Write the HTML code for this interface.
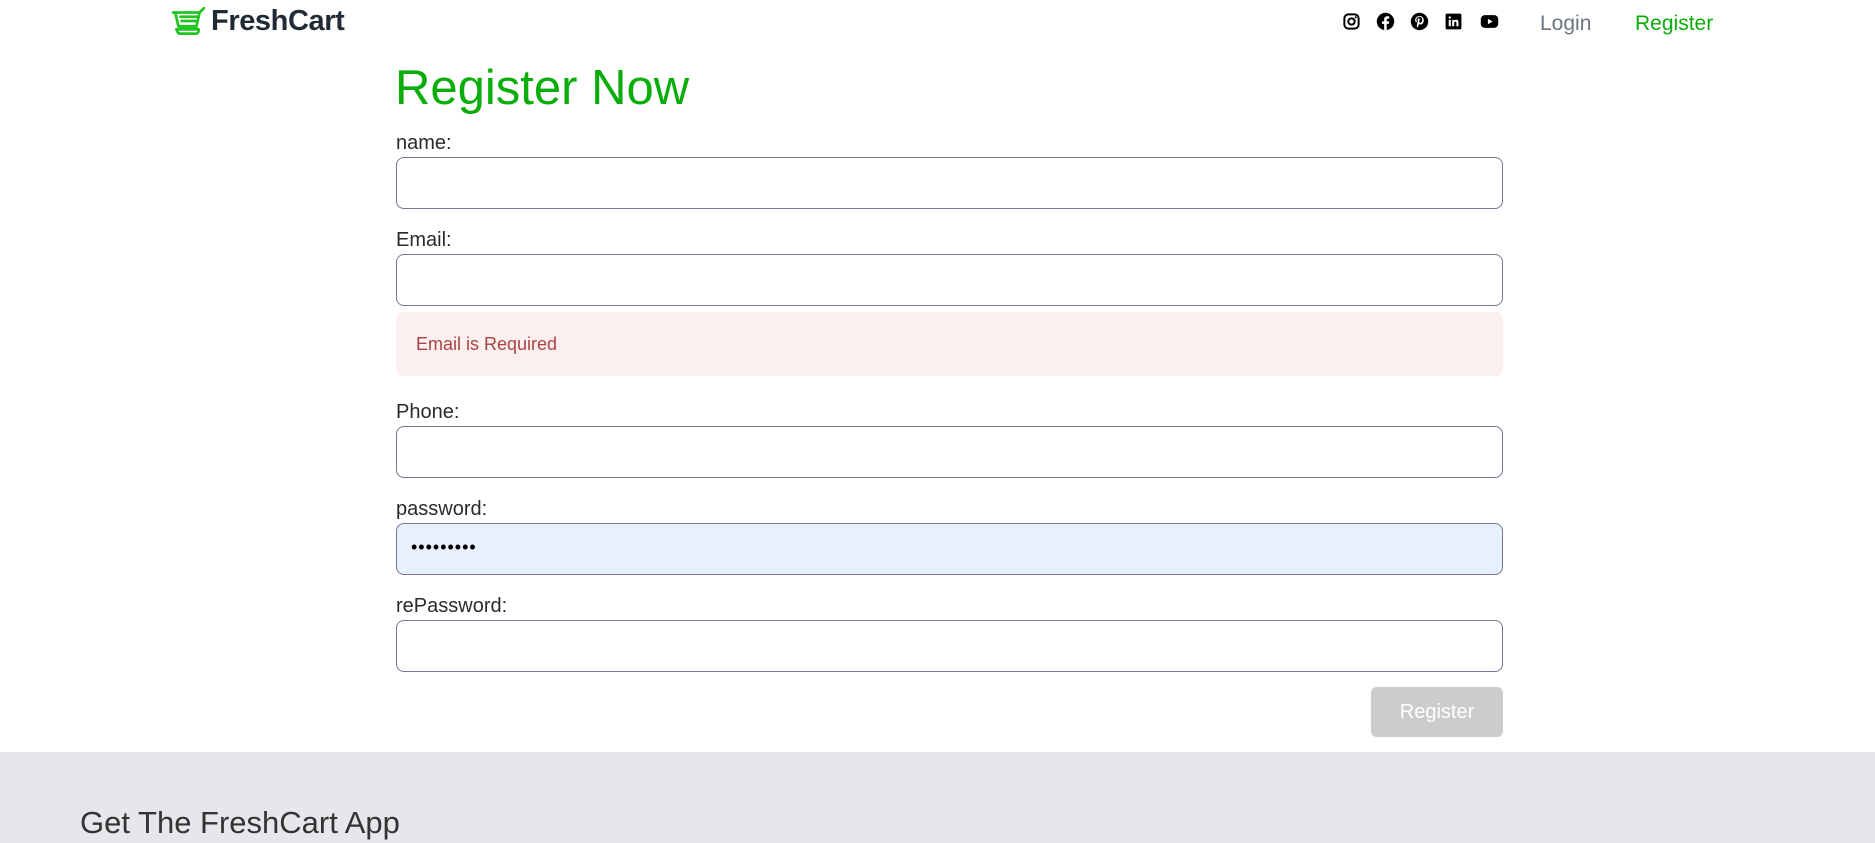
<!DOCTYPE html>
<html><head><meta charset="utf-8"><style>
*{box-sizing:border-box;margin:0;padding:0}
body{width:1875px;height:843px;overflow:hidden;background:#fff;font-family:"Liberation Sans",sans-serif;color:#212529;position:relative}
.abs{position:absolute}
.logo{left:171px;top:5px;display:flex;align-items:center}
.logo span{font-weight:bold;font-size:29px;color:#212b36;margin-left:4px;letter-spacing:-0.4px}
.icons{left:1342px;top:12px;display:flex;gap:15px}
.icons svg{width:19px;height:19px}
.nav{top:12px;font-size:21px}
label{position:absolute;left:396px;font-size:20px;color:#2a2a2a}
.inp{position:absolute;left:396px;width:1107px;height:52px;border:1px solid #767690;border-radius:8px;background:#fff}
.alert{position:absolute;left:396px;top:312px;width:1107px;height:64px;background:#fbefef;border-radius:8px;color:#a94442;font-size:18px;padding:22px 0 0 20px}
.btn{position:absolute;left:1371px;top:687px;width:132px;height:50px;background:#ccc;border-radius:6px;color:#fff;font-size:20px;text-align:center;line-height:50px}
.footer{position:absolute;left:0;top:752px;width:1875px;height:91px;background:#e5e7eb}
.footer div{position:absolute;left:80px;top:53px;font-size:31px;color:#333}
</style></head><body>
<div class="abs logo">
<svg width="36" height="30" viewBox="0 0 34 28" fill="none" stroke="#22c322" stroke-width="2.6" stroke-linecap="round" stroke-linejoin="round"><path d="M2 5h25l4-4"/><path d="M4 5l3 13h17l3-13"/><path d="M9 9h16M10 13h13"/><path d="M5 21h21"/><rect x="6" y="20" width="20" height="5" rx="2.5"/></svg>
<span>FreshCart</span></div>
<div class="abs icons">
<svg viewBox="0 0 24 24"><rect x="3" y="3" width="18" height="18" rx="5" fill="none" stroke="#000" stroke-width="2.5"/><circle cx="12" cy="12" r="4" fill="none" stroke="#000" stroke-width="2.5"/><circle cx="17.3" cy="6.7" r="1.3"/></svg>
<svg viewBox="0 0 24 24"><circle cx="12" cy="12" r="11"/><path d="M13.5 23v-8h2.7l.4-3.2h-3.1V9.9c0-.9.3-1.5 1.6-1.5h1.6V5.5c-.3 0-1.3-.1-2.4-.1-2.4 0-4 1.4-4 4.1v2.3H7.6V15h2.7v8z" fill="#fff"/></svg>
<svg viewBox="0 0 24 24"><circle cx="12" cy="12" r="11"/><path d="M12.3 5C8.4 5 6.5 7.7 6.5 10c0 1.4.5 2.6 1.6 3.1.2.1.4 0 .4-.2l.2-.7c.1-.2 0-.3-.1-.5-.3-.4-.5-.9-.5-1.6 0-2 1.5-3.9 4-3.9 2.2 0 3.4 1.3 3.4 3.1 0 2.4-1 4.3-2.6 4.3-.9 0-1.5-.7-1.3-1.6.2-1 .7-2.2.7-2.9 0-.7-.4-1.2-1.1-1.2-.9 0-1.6.9-1.6 2.2 0 .8.3 1.3.3 1.3l-1.1 4.6c-.2.9-.1 2.1 0 3l.8.3c.4-.7 1-1.8 1.2-2.6l.5-1.9c.3.5 1.1 1 1.9 1 2.5 0 4.2-2.3 4.2-5.3C17.4 7.2 15.4 5 12.3 5z" fill="#fff"/></svg>
<svg viewBox="0 0 24 24"><rect x="2" y="2" width="20" height="20" rx="2"/><path d="M6 10h2.6v8H6zM7.3 5.5a1.5 1.5 0 110 3 1.5 1.5 0 010-3zM10.3 10h2.5v1.1c.4-.7 1.2-1.3 2.5-1.3 2.6 0 3 1.7 3 3.9V18h-2.6v-3.8c0-.9 0-2.1-1.3-2.1s-1.5 1-1.5 2V18h-2.6z" fill="#fff"/></svg>
<svg viewBox="0 0 24 24" style="width:23px"><rect x="1" y="4" width="22" height="16" rx="5"/><path d="M10 8.5v7l6-3.5z" fill="#fff"/></svg>
</div>
<div class="abs nav" style="left:1540px;color:#6c757d">Login</div>
<div class="abs nav" style="left:1635px;color:#0aad0a">Register</div>
<div class="abs" style="left:395px;top:60px;font-size:49px;color:#0aad0a">Register Now</div>
<label style="top:132px">name:</label><div class="inp" style="top:157px"></div>
<label style="top:229px">Email:</label><div class="inp" style="top:254px"></div>
<div class="alert">Email is Required</div>
<label style="top:401px">Phone:</label><div class="inp" style="top:426px"></div>
<label style="top:498px">password:</label><div class="inp" style="top:523px;background:#e8f0fe"><span style="position:absolute;left:14px;top:13px;font-size:18px;letter-spacing:1px;color:#000">•••••••••</span></div>
<label style="top:595px">rePassword:</label><div class="inp" style="top:620px"></div>
<div class="btn">Register</div>
<div class="footer"><div>Get The FreshCart App</div></div>
</body></html>
